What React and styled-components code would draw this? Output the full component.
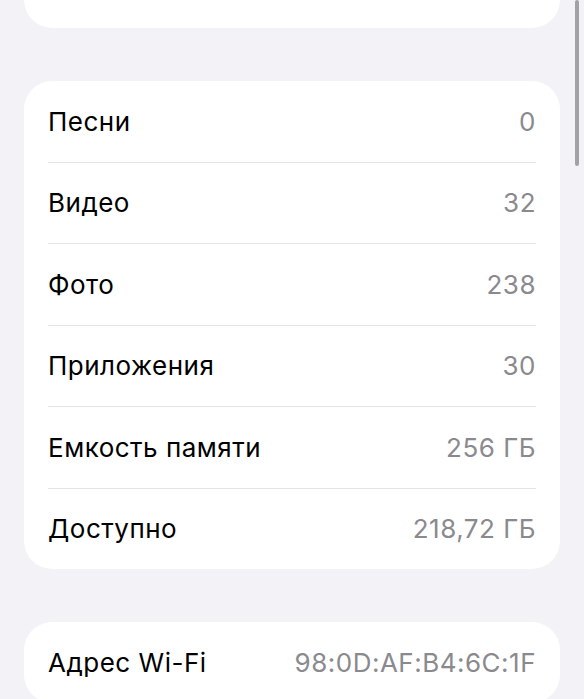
import React from "react";
import styled, { createGlobalStyle } from "styled-components";

const GlobalStyle = createGlobalStyle`
  html, body {
    margin: 0;
    padding: 0;
    background: #f2f2f7;
    overflow: hidden;
  }
  body {
    font-family: Inter, "Noto Sans", sans-serif;
    -webkit-font-smoothing: antialiased;
  }
`;

const Page = styled.div`
  position: relative;
  min-height: 699px;
  display: flex;
  flex-direction: column;
  gap: 53px;
  padding: 0 24px;
`;

const Stub = styled.div`
  height: 28px;
  background: #ffffff;
  border-radius: 0 0 28px 28px;
`;

const Card = styled.div`
  background: #ffffff;
  border-radius: 28px;
  padding: 0 24px;
`;

const Row = styled.div`
  height: 80.5px;
  display: flex;
  align-items: center;
  justify-content: space-between;
  border-bottom: 1px solid #e3e3e8;

  &:last-child {
    border-bottom: none;
  }
`;

const Label = styled.span`
  font-size: 26px;
  color: #000000;
  letter-spacing: 0.5px;
`;

const Value = styled.span`
  font-size: 26px;
  color: #8a8a8e;
  letter-spacing: 0.5px;
`;

const ScrollThumb = styled.div`
  position: absolute;
  top: 0;
  right: 5px;
  width: 4px;
  height: 166px;
  border-radius: 2px;
  background: #a2a2a6;
`;

const stats = [
  ["Песни", "0"],
  ["Видео", "32"],
  ["Фото", "238"],
  ["Приложения", "30"],
  ["Емкость памяти", "256 ГБ"],
  ["Доступно", "218,72 ГБ"],
];

const network = [["Адрес Wi-Fi", "98:0D:AF:B4:6C:1F"]];

const App = () => {
  return (
    <>
      <GlobalStyle />
      <Page>
        <Stub />
        <Card>
          {stats.map(([label, value]) => (
            <Row key={label}>
              <Label>{label}</Label>
              <Value>{value}</Value>
            </Row>
          ))}
        </Card>
        <Card>
          {network.map(([label, value]) => (
            <Row key={label}>
              <Label>{label}</Label>
              <Value>{value}</Value>
            </Row>
          ))}
        </Card>
        <ScrollThumb />
      </Page>
    </>
  );
};

export default App;
